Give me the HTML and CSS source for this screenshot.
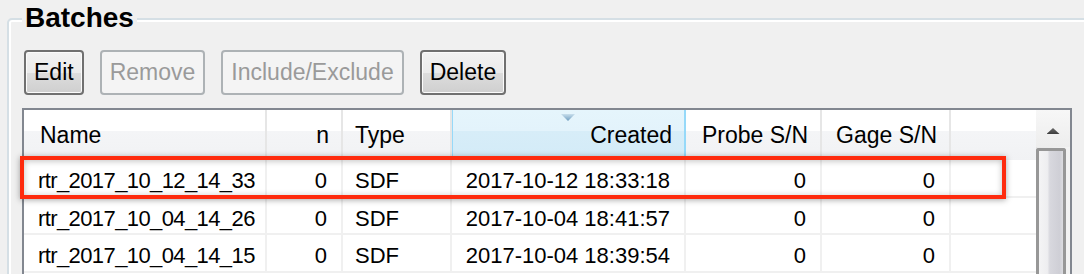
FILE: index.html
```html
<!DOCTYPE html>
<html lang="en">
<head>
  <meta charset="UTF-8">
  <title>Batches</title>
  <link rel="stylesheet" href="styles.css">
</head>
<body>
  <fieldset class="group">
    <legend>Batches</legend>

    <div class="toolbar">
      <button class="btn">Edit</button>
      <button class="btn" disabled>Remove</button>
      <button class="btn" disabled>Include/Exclude</button>
      <button class="btn">Delete</button>
    </div>

    <div class="listview">
      <div class="grid">
        <div class="row head">
          <div class="cell">Name</div>
          <div class="cell num">n</div>
          <div class="cell">Type</div>
          <div class="cell num sorted">Created<span class="sort-arrow"></span></div>
          <div class="cell num">Probe S/N</div>
          <div class="cell num">Gage S/N</div>
          <div class="cell last"></div>
        </div>

        <div class="row">
          <div class="cell name">rtr_2017_10_12_14_33</div>
          <div class="cell num">0</div>
          <div class="cell">SDF</div>
          <div class="cell num">2017-10-12 18:33:18</div>
          <div class="cell num">0</div>
          <div class="cell num">0</div>
          <div class="cell last"></div>
        </div>
        <div class="row">
          <div class="cell name">rtr_2017_10_04_14_26</div>
          <div class="cell num">0</div>
          <div class="cell">SDF</div>
          <div class="cell num">2017-10-04 18:41:57</div>
          <div class="cell num">0</div>
          <div class="cell num">0</div>
          <div class="cell last"></div>
        </div>
        <div class="row">
          <div class="cell name">rtr_2017_10_04_14_15</div>
          <div class="cell num">0</div>
          <div class="cell">SDF</div>
          <div class="cell num">2017-10-04 18:39:54</div>
          <div class="cell num">0</div>
          <div class="cell num">0</div>
          <div class="cell last"></div>
        </div>
      </div>

      <div class="scrollbar">
        <div class="scroll-up"><span class="arrow-up"></span></div>
        <div class="thumb"></div>
      </div>

      <!-- red annotation box around the newest batch -->
      <div class="highlight"></div>
    </div>
  </fieldset>
</body>
</html>
```

FILE: styles.css
```css
html, body {
  margin: 0;
  padding: 0;
}

body {
  background: #f0f0f0;
  color: #000;
  font-family: "Liberation Sans", Arial, sans-serif;
  overflow: hidden;
  height: 274px;
}

.group {
  margin: 3px -30px 0 7px;
  padding: 15px 0 0 13px;
  border: 2px solid #d5dfe5;
  border-radius: 5px;
  box-shadow: inset 0 0 0 2px #fff;
  min-width: 0;
}

.group legend {
  padding: 0 3px 2px;
  font-size: 28px;
  font-weight: bold;
  line-height: 30px;
  background: #f0f0f0;
}

.toolbar {
  display: flex;
  gap: 16px;
  margin-left: 2px;
}

.btn {
  height: 45px;
  padding: 0 8px;
  border: 2px solid #707070;
  border-radius: 4px;
  background: linear-gradient(#f2f2f2, #ebebeb 50%, #dddddd 50%, #cfcfcf);
  box-shadow: inset 0 0 0 1px #fbfbfb;
  font-family: "Liberation Sans", Arial, sans-serif;
  font-size: 23px;
  color: #000;
}

.btn:disabled {
  border-color: #adb2b5;
  background: #f4f4f4;
  box-shadow: none;
  color: #9a9a9a;
}

.listview {
  position: relative;
  display: flex;
  width: 1050px;
  height: 220px;
  margin-top: 13px;
  box-sizing: border-box;
  border: 2px solid #828790;
  background: #fff;
}

.grid {
  --cols: 243px 76px 109px 234px 136px 129px 85px;
  width: 1012px;
}

.row {
  display: grid;
  grid-template-columns: var(--cols);
  height: 37.5px;
  font-size: 22px;
}

.cell {
  box-sizing: border-box;
  padding: 7px 0 0 12px;
  line-height: 28px;
  white-space: nowrap;
  overflow: hidden;
  border-right: 2px solid #f0f0f0;
  border-bottom: 2px solid #f0f0f0;
}

.cell.num {
  text-align: right;
  padding: 7px 14px 0 0;
}

.cell.name {
  padding-left: 14px;
  letter-spacing: -0.6px;
}

.cell.last {
  border-right: none;
}

.row.head {
  height: 50px;
  font-size: 23px;
}

.head .cell {
  position: relative;
  padding-top: 4px;
  line-height: 43px;
  border-bottom: none;
  border-right-color: #e6e6e6;
  background: linear-gradient(#fff 0, #fff 42%, #f4f5f7 42%, #f1f2f4 100%);
}

.head .cell:first-child {
  padding-left: 16px;
}

.head .cell.num {
  padding-right: 12px;
}

.head .sorted {
  border-right-color: #96d9f9;
  box-shadow: inset 1px 0 0 #96d9f9;
  background: linear-gradient(#e5f5fc 0, #e3f3fb 42%, #d7edf8 42%, #d3ebf7 100%);
}

.sort-arrow {
  position: absolute;
  top: 4px;
  left: 50%;
  width: 14px;
  height: 7px;
  margin-left: -7px;
  background: linear-gradient(#c9dfed, #6d9cbf);
  clip-path: polygon(0 0, 100% 0, 50% 100%);
}

.scrollbar {
  width: 34px;
  background: linear-gradient(to right, #e9e9e9, #f3f3f3);
  box-shadow: inset 1px 0 0 #e2e2e2;
}

.scroll-up {
  display: flex;
  justify-content: center;
  height: 37px;
  padding-top: 18px;
  box-sizing: border-box;
  background: linear-gradient(#f7f7f7, #ededed);
}

.arrow-up {
  width: 13px;
  height: 6px;
  background: linear-gradient(#6b6b6b, #3c3c3c);
  clip-path: polygon(50% 0, 100% 100%, 0 100%);
}

.thumb {
  height: 200px;
  margin: 1px 4px 0 0;
  box-sizing: border-box;
  border: 3px solid #979797;
  border-bottom: none;
  border-radius: 3px 3px 0 0;
  background: linear-gradient(to right, #f4f4f5 0, #eeeef0 35%, #d8d8de 45%, #cfcfd6 85%, #dcdce0 100%);
}

.highlight {
  position: absolute;
  left: -4px;
  top: 46px;
  width: 986px;
  height: 43px;
  box-sizing: border-box;
  border: 4px solid #fe2b0e;
  box-shadow: 0 1px 6px rgba(0, 0, 0, 0.35), inset 0 1px 6px rgba(0, 0, 0, 0.25);
}
```
